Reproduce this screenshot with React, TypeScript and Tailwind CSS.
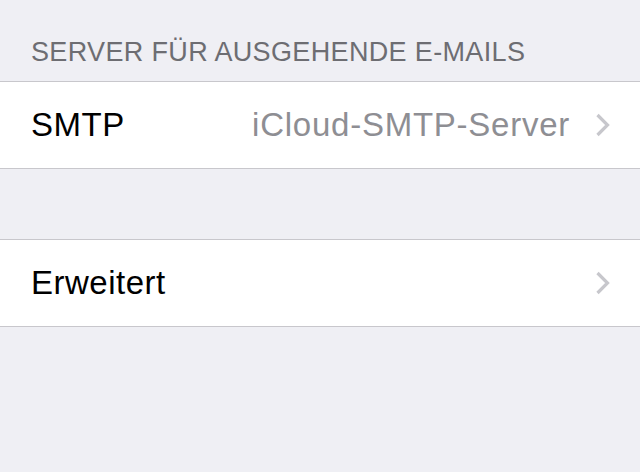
const Chevron = () => (
  <svg width="15" height="24" viewBox="0 0 15 24" className="shrink-0">
    <path d="M2.5 2 L12.5 12 L2.5 22" fill="none" stroke="#c7c7cc" strokeWidth="3.2" />
  </svg>
);

const Row = ({ label, value }: { label: string; value?: string }) => (
  <div className="flex h-[88px] items-center border-y border-[#c8c7cc] bg-white pl-[31px] pr-[30px]">
    <span className="flex-1 text-[33px] tracking-[0.5px] text-black">{label}</span>
    {value && <span className="text-[33px] tracking-[0.75px] text-[#8e8e93]">{value}</span>}
    <div className="ml-[25px] flex items-center">
      <Chevron />
    </div>
  </div>
);

export default function App() {
  return (
    <div
      className="h-[472px] w-[640px] overflow-hidden bg-[#efeff4]"
      style={{ fontFamily: '"Liberation Sans", Arial, sans-serif' }}
    >
      {/* HEADER */}
      <div className="px-[31px] pt-[37px] pb-[14px] text-[27px] leading-[30px] tracking-[0.35px] text-[#6d6d72]">
        SERVER FÜR AUSGEHENDE E-MAILS
      </div>

      <Row label="SMTP" value="iCloud-SMTP-Server" />

      <div className="h-[70px]" />

      <Row label="Erweitert" />
    </div>
  );
}
